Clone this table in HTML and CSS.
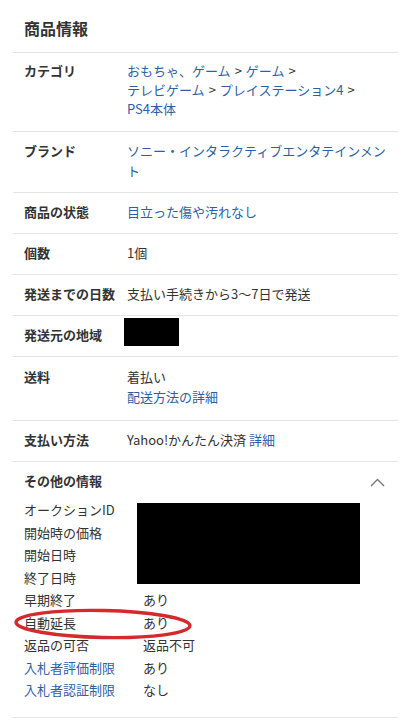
FILE: index.html
```html
<!DOCTYPE html>
<html lang="ja">
<head>
<meta charset="utf-8">
<title>商品情報</title>
<link rel="stylesheet" href="styles.css">
</head>
<body>
<div class="page">
  <h2 class="title">商品情報</h2>
  <div class="spec">
    <div class="row row-category">
      <div class="label">カテゴリ</div>
      <div class="value">
        <span class="line"><a class="link">おもちゃ、ゲーム</a><span class="sep">&gt;</span><a class="link">ゲーム</a><span class="sep">&gt;</span></span>
        <span class="line"><a class="link">テレビゲーム</a><span class="sep">&gt;</span><a class="link">プレイステーション4</a><span class="sep">&gt;</span></span>
        <span class="line"><a class="link">PS4本体</a></span>
      </div>
    </div>
    <div class="row">
      <div class="label">ブランド</div>
      <div class="value"><a class="link">ソニー・インタラクティブエンタテインメント</a></div>
    </div>
    <div class="row">
      <div class="label">商品の状態</div>
      <div class="value"><a class="link">目立った傷や汚れなし</a></div>
    </div>
    <div class="row">
      <div class="label">個数</div>
      <div class="value">1個</div>
    </div>
    <div class="row">
      <div class="label">発送までの日数</div>
      <div class="value">支払い手続きから3〜7日で発送</div>
    </div>
    <div class="row row-redact">
      <div class="label">発送元の地域</div>
      <div class="value">&nbsp;</div>
      <div class="redact redact-area"></div>
    </div>
    <div class="row row-shipping">
      <div class="label">送料</div>
      <div class="value">
        <span class="line">着払い</span>
        <span class="line"><a class="link">配送方法の詳細</a></span>
      </div>
    </div>
    <div class="row">
      <div class="label">支払い方法</div>
      <div class="value">Yahoo!かんたん決済 <a class="link">詳細</a></div>
    </div>
  </div>

  <section class="other">
    <div class="other-head">
      <span class="other-title">その他の情報</span>
      <svg class="chevron" width="15" height="9" viewBox="0 0 15 9" aria-hidden="true">
        <polyline points="1,8 7.5,1.5 14,8" fill="none" stroke="#777" stroke-width="1.4"/>
      </svg>
    </div>
    <div class="other-list">
      <div class="item"><span class="ilabel">オークションID</span><span class="ivalue"></span></div>
      <div class="item"><span class="ilabel">開始時の価格</span><span class="ivalue"></span></div>
      <div class="item"><span class="ilabel">開始日時</span><span class="ivalue"></span></div>
      <div class="item"><span class="ilabel">終了日時</span><span class="ivalue"></span></div>
      <div class="item"><span class="ilabel">早期終了</span><span class="ivalue">あり</span></div>
      <div class="item"><span class="ilabel">自動延長</span><span class="ivalue">あり</span></div>
      <div class="item"><span class="ilabel">返品の可否</span><span class="ivalue">返品不可</span></div>
      <div class="item"><span class="ilabel link">入札者評価制限</span><span class="ivalue">あり</span></div>
      <div class="item"><span class="ilabel link">入札者認証制限</span><span class="ivalue">なし</span></div>
      <div class="redact redact-info"></div>
      <svg class="circle" width="182" height="34" viewBox="0 0 182 34" aria-hidden="true">
        <ellipse cx="90" cy="17" rx="87" ry="13.5" fill="none" stroke="#d42a2e" stroke-width="3.4" transform="rotate(1.2 90 17)"/>
      </svg>
    </div>
  </section>
</div>
</body>
</html>
```

FILE: styles.css
```css
* {
  box-sizing: border-box;
}

html, body {
  margin: 0;
  padding: 0;
  background: #ffffff;
}

body {
  font-family: "Noto Sans CJK JP", "Noto Sans", sans-serif;
  font-size: 13px;
  color: #333333;
}

.page {
  margin: 0 15px 0 13px;
}

.title {
  margin: 0;
  padding: 16px 11px 12px;
  font-size: 16px;
  line-height: 24px;
  font-weight: bold;
  color: #333333;
  border-bottom: 1px solid #e4e4e4;
}

.row {
  position: relative;
  display: grid;
  grid-template-columns: 103px 1fr;
  padding: 9px 8px 11px 11px;
  line-height: 20px;
  border-bottom: 1px solid #e4e4e4;
}

.row-category {
  padding: 8px 8px 13px 11px;
  line-height: 19px;
}

.row-shipping {
  padding-top: 10px;
  padding-bottom: 13px;
}

.label {
  font-weight: bold;
}

.value .line {
  display: block;
  white-space: nowrap;
}

.sep {
  margin: 0 4px;
}

.link {
  color: #2c5fa6;
  text-decoration: none;
}

.redact {
  position: absolute;
  background: #000000;
}

.redact-area {
  left: 111px;
  top: 2px;
  width: 55px;
  height: 28px;
}

.other {
  border-bottom: 1px solid #e4e4e4;
}

.other-head {
  display: flex;
  justify-content: space-between;
  align-items: center;
  padding: 9px 13px 0 11px;
  line-height: 20px;
}

.other-title {
  font-weight: bold;
}

.chevron {
  display: block;
  margin-top: 2px;
}

.other-list {
  position: relative;
  padding: 8px 11px 15px;
}

.item {
  display: grid;
  grid-template-columns: 119px 1fr;
  line-height: 22.5px;
  height: 22.5px;
}

.redact-info {
  left: 124px;
  top: 12px;
  width: 223px;
  height: 81px;
}

.circle {
  position: absolute;
  left: 0;
  top: 116px;
}
```
